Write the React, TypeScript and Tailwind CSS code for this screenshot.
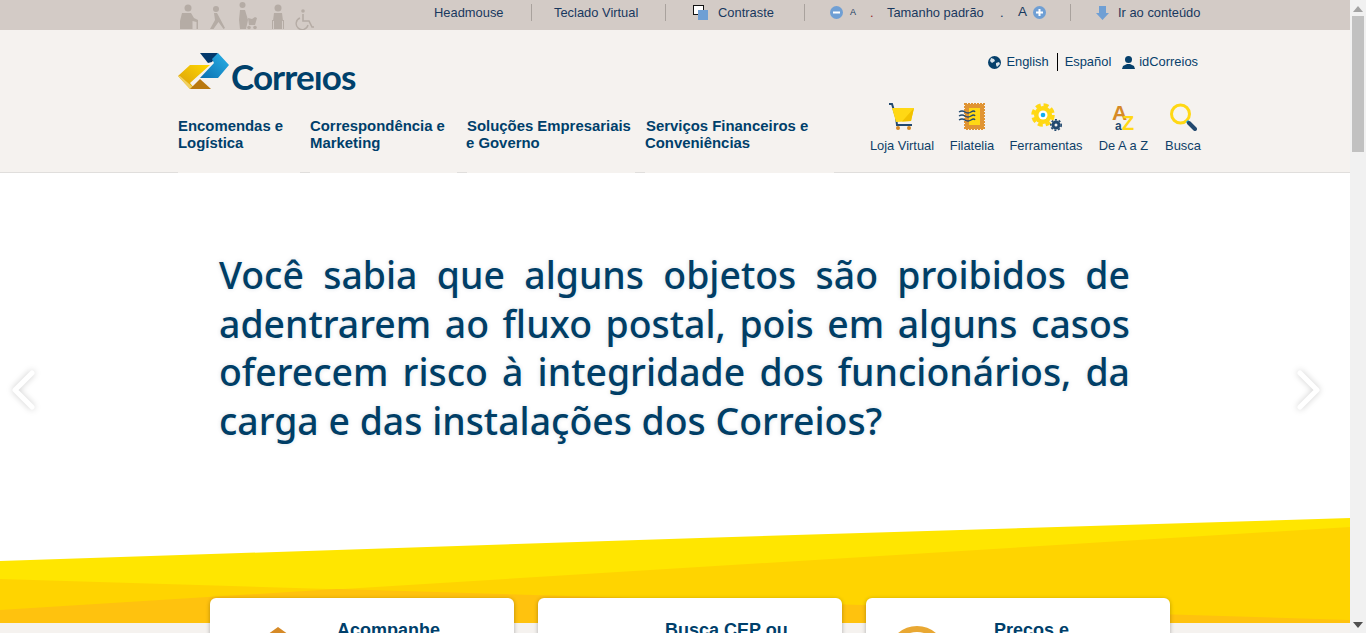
const sans = 'font-["Liberation_Sans",Arial,sans-serif]';

function AccessIcons() {
  return (
    <svg width="136" height="30" viewBox="0 0 136 30" fill="#b5aca5" className="block self-start">
      {/* idoso */}
      <circle cx="10" cy="8" r="3.500" />
      <path d="M4 13h9l3 5 4 2v9h-1.500v-7l-4-1v8H2v-8z" />
      {/* bengala */}
      <circle cx="38" cy="9" r="3" />
      <path d="M36 13h3l8 15-1.500 1-5-7-5 7H32l5-9z" />
      {/* gestante com carrinho */}
      <circle cx="64.500" cy="5" r="3" />
      <path d="M62 10h5l3 10-2 9h-6l-1-9z" />
      <path d="M70 18l4 1 3-2 2 1-2 7h-6z" />
      <circle cx="71" cy="27.500" r="1.800" />
      <circle cx="77" cy="27.500" r="1.800" />
      {/* obeso */}
      <circle cx="100" cy="8" r="3.500" />
      <path d="M96 13h8l1 8h-1v8h-8v-8h-1zM94 20h1v9h-1zM105 20h1v9h-1z" />
      {/* cadeirante */}
      <circle cx="125" cy="11" r="1.800" />
      <path d="M125 14v7h6l3 6h2" fill="none" stroke="#b5aca5" strokeWidth="1.600" />
      <path d="M122 18a6 6 0 1 0 8 7" fill="none" stroke="#b5aca5" strokeWidth="1.400" />
    </svg>
  );
}

function Logo() {
  return (
    <svg width="51" height="37" viewBox="0 0 51 37" className="mt-px block">
      <defs>
        <linearGradient id="lg-blue" x1="0" y1="1" x2="1" y2="0">
          <stop offset="0" stopColor="#0b6fb0" />
          <stop offset="1" stopColor="#2ab3e8" />
        </linearGradient>
        <linearGradient id="lg-gold" x1="0" y1="1" x2="1" y2="0">
          <stop offset="0" stopColor="#d99c0c" />
          <stop offset="1" stopColor="#ffd800" />
        </linearGradient>
      </defs>
      <polygon points="22,0 40,0 34,9 30,10" fill="#03396c" />
      <polygon points="40,0 51,12 40,25 22,25 36,10 34,6" fill="url(#lg-blue)" />
      <polygon points="12,12 32,12 12,30 17,36 12,36 0,23" fill="url(#lg-gold)" />
      <polygon points="0,23 2,23 17,36 12,36" fill="#f0d060" />
      <polygon points="12,36 22,26 33,36" fill="#b9780f" />
    </svg>
  );
}

function TopSep() {
  return <span className="block h-[17px] w-px bg-[#a9a29d]" />;
}

function CircleSign({ plus }: { plus?: boolean }) {
  return (
    <svg width="13" height="13" viewBox="0 0 13 13" className="block">
      <circle cx="6.500" cy="6.500" r="6.500" fill="#6f9fd4" />
      <rect x="3" y="5.500" width="7" height="2" fill="#fff" />
      {plus && <rect x="5.500" y="3" width="2" height="7" fill="#fff" />}
    </svg>
  );
}

function TopBar() {
  return (
    <div className={`flex h-[30px] items-center bg-[#d3cbc6] pb-[5px] pl-[178px] text-[12.900px] text-[#18385e] ${sans}`}>
      <AccessIcons />
      <span className="ml-[120px] w-[70px] whitespace-nowrap">Headmouse</span>
      <span className="ml-[27px]"><TopSep /></span>
      <span className="ml-[22px] w-[85px] whitespace-nowrap">Teclado Virtual</span>
      <span className="ml-[26px]"><TopSep /></span>
      <svg width="16" height="15" viewBox="0 0 16 15" className="mb-px ml-[27px] block">
        <rect x=".5" y=".5" width="10" height="9" fill="#fff" stroke="#111" />
        <rect x="5" y="5" width="10" height="10" fill="#6f9fd4" />
      </svg>
      <span className="ml-[9px] w-[57px] whitespace-nowrap">Contraste</span>
      <span className="ml-[29px]"><TopSep /></span>
      <span className="ml-[25px]"><CircleSign /></span>
      <span className="ml-[7px] w-[13px] text-[9px]">A</span>
      <span className="ml-[7px] w-[10px] text-[#9a2b2b]">.</span>
      <span className="ml-[7px] w-[98px] whitespace-nowrap">Tamanho padrão</span>
      <span className="ml-[15px] w-[18px]">.</span>
      <span className="w-[15px] text-[13.500px]">A</span>
      <span><CircleSign plus /></span>
      <span className="ml-[24px]"><TopSep /></span>
      <svg width="13" height="14" viewBox="0 0 13 14" className="ml-[25px] block">
        <path d="M3 0h7v7h3l-6.500 7L0 7h3z" fill="#6f9fd4" />
      </svg>
      <span className="ml-[9px] whitespace-nowrap">Ir ao conteúdo</span>
    </div>
  );
}

const menu = [
  { lines: ['Encomendas e', 'Logística'], w: 'w-[132px]', first: '' },
  { lines: ['Correspondência e', 'Marketing'], w: 'w-[156px]', first: '' },
  { lines: ['Soluções Empresariais', 'e Governo'], w: 'w-[179px]', first: 'pl-px' },
  { lines: ['Serviços Financeiros e', 'Conveniências'], w: 'w-[190px]', first: 'pl-px' },
];

function MainMenu() {
  return (
    <nav className={`flex text-[14.900px] font-bold leading-[17px] text-[#003f6b] ${sans}`}>
      {menu.map((m) => (
        <div key={m.lines[0]} className={m.w}>
          <div className={`whitespace-nowrap ${m.first}`}>{m.lines[0]}</div>
          <div>{m.lines[1]}</div>
        </div>
      ))}
    </nav>
  );
}

function CartIcon() {
  return (
    <svg width="28" height="28" viewBox="0 0 28 28" className="block">
      <path d="M1 1h3l4 13 1 8h15" fill="none" stroke="#22496f" strokeWidth="2" />
      <path d="M4 5h22l-3 13-15 1z" fill="#ffd814" />
      <path d="M26 5l-3 13-9 .5z" fill="#f2c200" />
      <circle cx="10" cy="25" r="2" fill="#d68a27" />
      <circle cx="21" cy="25" r="2" fill="#d68a27" />
    </svg>
  );
}

function StampIcon() {
  return (
    <svg width="28" height="28" viewBox="0 0 28 28" className="block">
      <rect x="7" y="1" width="19" height="25" fill="#e09433" stroke="#e09433" strokeDasharray="2 1" strokeWidth="2" />
      <rect x="11" y="5" width="11" height="17" fill="#ffd814" />
      <path d="M1 9q3-2 6 0t6 0q3-2 4 0M1 13q3-2 6 0t6 0q3-2 4 0M1 17q3-2 6 0t6 0q3-2 4 0" fill="none" stroke="#22496f" strokeWidth="1.300" />
    </svg>
  );
}

function GearsIcon() {
  return (
    <svg width="32" height="28" viewBox="0 0 32 28" className="block">
      <circle cx="13" cy="12" r="9" fill="#ffd814" />
      <circle cx="13" cy="12" r="10" fill="none" stroke="#ffd814" strokeWidth="3.500" strokeDasharray="5 2.900" />
      <circle cx="13" cy="12" r="4.500" fill="#fff" />
      <circle cx="13" cy="12" r="2.300" fill="#12aef0" />
      <circle cx="26" cy="22" r="3" fill="none" stroke="#22496f" strokeWidth="3" />
      <circle cx="26" cy="22" r="5.200" fill="none" stroke="#22496f" strokeWidth="1.600" strokeDasharray="2 1.800" />
    </svg>
  );
}

function AzIcon() {
  return (
    <svg width="24" height="28" viewBox="0 0 24 28" className={`block overflow-visible ${sans}`}>
      <text x="0" y="17" fontSize="21" fontWeight="700" fill="#d68a27">A</text>
      <text x="10" y="27" fontSize="20" fontWeight="700" fill="#ffd814">Z</text>
      <text x="3" y="27" fontSize="12" fontWeight="700" fill="#22496f">a</text>
    </svg>
  );
}

function SearchIcon() {
  return (
    <svg width="28" height="28" viewBox="0 0 28 28" className="block">
      <circle cx="11.500" cy="11" r="9" fill="#f7f5ef" stroke="#ffd814" strokeWidth="3" />
      <path d="M18 18l2 2" stroke="#12aef0" strokeWidth="3" />
      <path d="M20 20l6 6" stroke="#22496f" strokeWidth="4" strokeLinecap="round" />
    </svg>
  );
}

const tools = [
  { label: 'Loja Virtual', icon: <CartIcon />, w: 'w-[64px]' },
  { label: 'Filatelia', icon: <StampIcon />, w: 'w-[44px]' },
  { label: 'Ferramentas', icon: <GearsIcon />, w: 'w-[72px]' },
  { label: 'De A a Z', icon: <AzIcon />, w: 'w-[51px]' },
  { label: 'Busca', icon: <SearchIcon />, w: 'w-[36px]' },
];

function Header() {
  return (
    <header className="relative h-[143px] border-b border-[#e0dedc] bg-[#f5f2ef] pl-[178px] pr-[149px]">
      <div className="flex justify-between pt-[22px]">
        <div className="flex h-[47px] items-start">
          <Logo />
          <span className="ml-[2px] mt-[2px] font-['Lato',sans-serif] text-[35px] font-bold leading-[44px] tracking-[-.9px] text-[#00416b]">Correıos</span>
        </div>
        <div className={`mr-[3px] mt-px flex h-[18px] items-center text-[12.900px] text-[#06406b] ${sans}`}>
          <svg width="13" height="13" viewBox="0 0 13 13" className="mr-[5px] block">
            <circle cx="6.500" cy="6.500" r="6.500" fill="#06406b" />
            <path d="M3 2l3 1 1 2-3 2-2-2zM8 7l3-1 1 2-3 3-1-2z" fill="#d9e3ea" />
          </svg>
          <span>English</span>
          <span className="ml-[8px] mr-[7px] h-[18px] w-px bg-black" />
          <span>Español</span>
          <svg width="13" height="13" viewBox="0 0 13 13" className="ml-[11px] mr-[4px] block">
            <circle cx="6.500" cy="3.500" r="3.500" fill="#06406b" />
            <path d="M0 13l1-3 4-2h3l4 2 1 3z" fill="#06406b" />
          </svg>
          <span>idCorreios</span>
        </div>
      </div>
      <div className="mt-[19px] flex justify-between">
        <MainMenu />
        <div className={`-mt-[15px] flex gap-x-[16px] text-[12.900px] text-[#0f3f68] ${sans}`}>
          {tools.map((t) => (
            <div key={t.label} className={`flex ${t.w} flex-col items-center`}>
              <div className="flex h-[28px] items-center">{t.icon}</div>
              <span className="mt-[7px] whitespace-nowrap leading-[16px]">{t.label}</span>
            </div>
          ))}
        </div>
      </div>
      {/* a linha some embaixo de cada item do menu */}
      <div className="absolute -bottom-px left-[178px] flex h-px gap-x-[10px]">
        <span className="w-[122px] bg-[#f5f2ef]" />
        <span className="w-[147px] bg-[#f5f2ef]" />
        <span className="w-[168px] bg-[#f5f2ef]" />
        <span className="w-[189px] bg-[#f5f2ef]" />
      </div>
    </header>
  );
}

function Arrow({ right }: { right?: boolean }) {
  return (
    <svg width="26" height="40" viewBox="0 0 26 40" className="block drop-shadow-[0_0_3px_rgba(0,0,0,.2)]">
      <path d={right ? 'M5 3l17 17L5 37' : 'M21 3L4 20l17 17'} fill="none" stroke="#fff" strokeWidth="5" strokeLinecap="round" strokeLinejoin="round" />
    </svg>
  );
}

function Hero() {
  return (
    <section className="flex h-[342px] items-start bg-white pl-[11px]">
      <div className="mt-[197px]"><Arrow /></div>
      <p className="ml-[182px] mt-[78px] w-[911px] text-justify font-['Noto_Sans',sans-serif] text-[37.400px] font-medium leading-[48.500px] text-[#003e66] [text-shadow:0_0_4px_rgba(0,62,102,.15)]">
        Você sabia que alguns objetos são proibidos de adentrarem ao fluxo postal, pois em alguns casos oferecem risco à integridade dos funcionários, da carga e das instalações dos Correios?
      </p>
      <div className="ml-[165px] mt-[197px]"><Arrow right /></div>
    </section>
  );
}

function Band() {
  return (
    <svg viewBox="0 0 1350 108" preserveAspectRatio="none" className="absolute inset-x-0 top-0 block h-[108px] w-[1350px]">
      <rect width="1350" height="108" fill="#fff" />
      <polygon points="0,46 700,23 1350,3 1350,108 0,108" fill="#ffe600" />
      <polygon points="0,64 1350,105 1350,108 0,108" fill="#ffd400" />
      <polygon points="0,95 1350,12 1350,108 0,108" fill="#ffd400" />
      <polygon points="0,95 337,74 1350,105 1350,108 0,108" fill="#ffc20e" />
    </svg>
  );
}

const cards = [
  { title: 'Acompanhe', icon: <path d="M0 10L14 0l14 10v14H0z" fill="#d68a27" />, iconClass: 'ml-[54px] mt-[29px]', textClass: 'ml-[17px]' },
  { title: 'Busca CEP ou', icon: null, iconClass: 'ml-[54px] mt-[29px]', textClass: 'ml-[17px]' },
  { title: 'Preços e', icon: <circle cx="28" cy="29" r="26" fill="none" stroke="#e9a833" strokeWidth="6" />, iconClass: 'ml-[23px] mt-[28px]', textClass: 'ml-[49px]' },
];

function Cards() {
  return (
    <div className="relative ml-[210px] flex gap-x-[24px] pt-[83px]">
      {cards.map((c) => (
        <div key={c.title} className="flex h-[160px] w-[304px] rounded-[6px] bg-white shadow-[0_1px_4px_rgba(0,0,0,.3)]">
          <svg width="56" height="60" viewBox="0 0 56 60" className={`block shrink-0 ${c.iconClass}`}>{c.icon}</svg>
          <div className={`${c.textClass} pt-[22px] text-[18px] font-bold leading-5 text-[#003f6b] ${sans}`}>{c.title}</div>
        </div>
      ))}
    </div>
  );
}

function Scrollbar() {
  return (
    <aside className="flex h-full w-4 shrink-0 flex-col items-center bg-[#f1f1f1]">
      <svg width="10" height="6" viewBox="0 0 10 6" className="mt-[6px] block">
        <path d="M5 0l5 6H0z" fill="#a3a3a3" />
      </svg>
      <div className="mt-[4px] h-[136px] w-3 bg-[#c1c1c1]" />
      <svg width="10" height="6" viewBox="0 0 10 6" className="mb-[5px] mt-auto block">
        <path d="M0 0h10L5 6z" fill="#505050" />
      </svg>
    </aside>
  );
}

export default function App() {
  return (
    <div className="flex h-[633px] w-[1366px] overflow-hidden bg-white">
      <main className="h-full w-[1350px] shrink-0 overflow-hidden">
        <TopBar />
        <Header />
        <Hero />
        <div className="relative h-[120px] bg-[#f5f2ef]">
          <Band />
          <Cards />
        </div>
      </main>
      <Scrollbar />
    </div>
  );
}
